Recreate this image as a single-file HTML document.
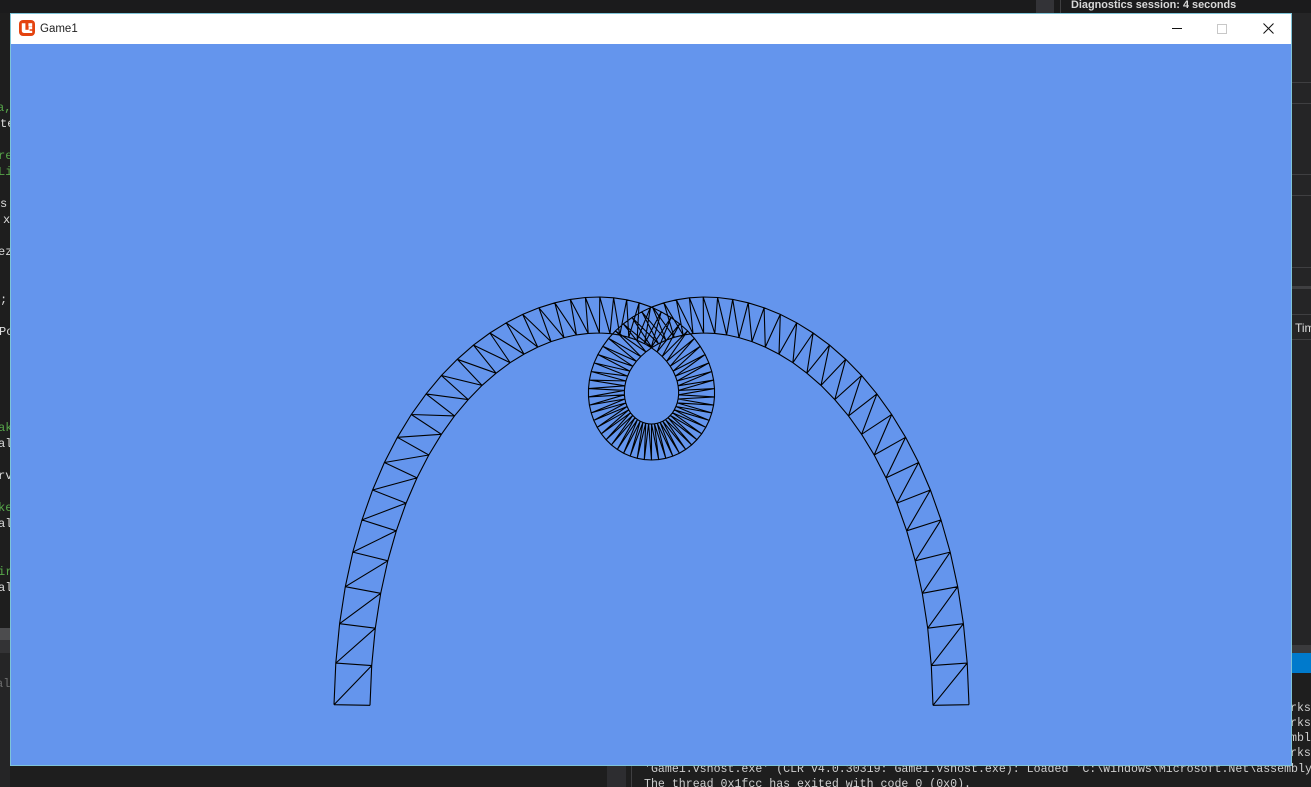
<!DOCTYPE html>
<html><head><meta charset="utf-8"><title>Game1</title>
<style>
html,body{margin:0;padding:0;background:#1e1e1e;width:1311px;height:787px;overflow:hidden}
body{position:relative;font-family:"Liberation Mono",monospace}
.a{position:absolute}
.t{position:absolute;font:12px/15px "Liberation Mono",monospace;color:#dcdcdc;white-space:pre}
.g{color:#57a64a}
.l{position:absolute;left:1292px;width:19px;height:1px;background:#3f3f41}
.o{position:absolute;font:11.6px/15px "Liberation Mono",monospace;color:#cfcfcf;white-space:pre}
</style></head><body>
<div class="a" style="left:0;top:0;width:1311px;height:13px;background:#1b1b1c"></div>
<div class="a" style="left:1036px;top:0;width:18px;height:13px;background:#333337"></div>
<div class="a" style="left:1060px;top:0;width:1px;height:13px;background:#3f3f41"></div>
<div class="a" style="left:1071px;top:-2px;font:bold 10.9px/15px 'Liberation Sans',sans-serif;color:#d8d8d8;white-space:pre">Diagnostics session: 4 seconds</div>

<div class="t g" style="left:-3px;top:101px">a,</div>
<div class="t" style="left:0;top:117px">te</div>
<div class="t g" style="left:-2px;top:149px">re</div>
<div class="t g" style="left:-2px;top:165px">Li</div>
<div class="t" style="left:0;top:197px">s</div>
<div class="t" style="left:3px;top:213px">x</div>
<div class="t" style="left:-2px;top:245px">ez</div>
<div class="t" style="left:0;top:293px">;</div>
<div class="t" style="left:-1px;top:325px">Po</div>
<div class="t g" style="left:-2px;top:421px">ak</div>
<div class="t" style="left:-2px;top:437px">al</div>
<div class="t" style="left:-2px;top:469px">rv</div>
<div class="t g" style="left:-2px;top:501px">ke</div>
<div class="t" style="left:-2px;top:517px">al</div>
<div class="t g" style="left:-2px;top:565px">ir</div>
<div class="t" style="left:-2px;top:581px">al</div>
<div class="a" style="left:0;top:628px;width:10px;height:12px;background:#4c4c4e"></div>
<div class="a" style="left:0;top:640px;width:10px;height:13px;background:#333335"></div>
<div class="a" style="left:0;top:653px;width:10px;height:134px;background:#252526"></div>
<div class="t" style="left:-4px;top:677px;color:#6e6e6e">alu</div>

<div class="a" style="left:1292px;top:13px;width:19px;height:640px;background:#252526"></div>
<div class="l" style="top:82px"></div>
<div class="l" style="top:103px"></div>
<div class="l" style="top:174px"></div>
<div class="l" style="top:195px"></div>
<div class="l" style="top:267px"></div>
<div class="l" style="top:286px;height:3px"></div>
<div class="l" style="top:314px"></div>
<div class="l" style="top:339px"></div>
<div class="a" style="left:1295px;top:321px;font:12px/15px 'Liberation Sans',sans-serif;color:#dcdcdc">Tim</div>
<div class="a" style="left:1292px;top:645px;width:19px;height:8px;background:#3a3a3c"></div>
<div class="a" style="left:1292px;top:653px;width:19px;height:20px;background:#007acc"></div>
<div class="o" style="left:1290px;top:701px">rks</div>
<div class="o" style="left:1290px;top:716px">rks</div>
<div class="o" style="left:1290px;top:731px">mbly</div>
<div class="o" style="left:1290px;top:746px">rks</div>
<div class="a" style="left:607px;top:765px;width:19px;height:22px;background:#2d2d30"></div>
<div class="a" style="left:631px;top:765px;width:1px;height:22px;background:#3f3f41"></div>
<div class="o" style="left:644px;top:762px">'Game1.vshost.exe' (CLR v4.0.30319: Game1.vshost.exe): Loaded 'C:\Windows\Microsoft.Net\assembly</div>
<div class="o" style="left:644px;top:777px">The thread 0x1fcc has exited with code 0 (0x0).</div>

<div class="a" style="left:10px;top:13px;width:1282px;height:753px;background:#6495ed;border:1px solid #7fc4d8;box-sizing:border-box"></div>
<div class="a" style="left:11px;top:14px;width:1280px;height:30px;background:#fff"></div>

<svg class="a" style="left:19px;top:20px" width="16" height="16" viewBox="0 0 16 16">
<rect width="16" height="16" rx="4" fill="#e4430f"/>
<path d="M2.8 3.2h3.6v6.6h3.2V6.6h3.6v2.6H10.6v1.6h2.6v2.2H5c-1.3 0-2.2-.9-2.2-2.2z" fill="#fff"/>
<path d="M6.6 3h2.8v6.6H6.6z" fill="#e4430f"/>
<path d="M9.4 3.2h3.8v3.2H9.4z" fill="#fff"/>
</svg>
<div class="a" style="left:40px;top:21px;font:11.5px/16px 'Liberation Sans',sans-serif;color:#222;white-space:pre">Game1</div>

<svg class="a" style="left:1160px;top:14px" width="131" height="30" viewBox="0 0 131 30">
<path d="M12 14.5H22" stroke="#111" stroke-width="1" fill="none"/>
<rect x="57.5" y="10.5" width="9" height="9" stroke="#c8c8c8" stroke-width="1" fill="none"/>
<path d="M103.5 9.5L113.5 19.5M113.5 9.5L103.5 19.5" stroke="#111" stroke-width="1" fill="none"/>
</svg>

<svg id="s" class="a" style="left:0;top:0" width="1311" height="787" viewBox="0 0 1311 787"></svg>
<script>
(function(){
var cx=651.5,N=100,r=18,A=[],B=[];
function X(s){var u=s*s;
  return s*(274.3-1263.4*u+689.6*u*u)
    -60*s*(1-u)*(u-.2517)*(u-.672)
    +85*s*(1-u)*(1-u)*(1-u)*(u-.2517)
    -90*s*u*(1-u)*(1-u)*(u-.2517)*(-1);}
function Y(s){var u=s*s;return 442-699*u+962*u*u;}
for(var i=0;i<=N;i++){
  var t=1-2*i/N,w=1-t*t,s=t*(1.073-.073*t*t)-.03*t*w*w,h=1e-4;
  var x=cx+X(s),y=Y(s);
  var tx=-(X(s+h)-X(s-h)),ty=-(Y(s+h)-Y(s-h)),m=Math.sqrt(tx*tx+ty*ty)||1;tx/=m;ty/=m;
  var nx=ty,ny=-tx;
  A.push([x+nx*r,y+ny*r]);B.push([x-nx*r,y-ny*r]);
}
function f(p){return p[0].toFixed(1)+' '+p[1].toFixed(1);}
var d='M'+A.map(f).join('L')+'M'+B.map(f).join('L');
for(i=0;i<=N;i++){d+='M'+f(A[i])+'L'+f(B[i]);if(i<N)d+='M'+f(A[i])+'L'+f(B[i+1]);}
var p=document.createElementNS('http://www.w3.org/2000/svg','path');
p.setAttribute('d',d);p.setAttribute('fill','none');p.setAttribute('stroke','#000');p.setAttribute('stroke-width','1.1');
document.getElementById('s').appendChild(p);
})();
</script>
</body></html>
